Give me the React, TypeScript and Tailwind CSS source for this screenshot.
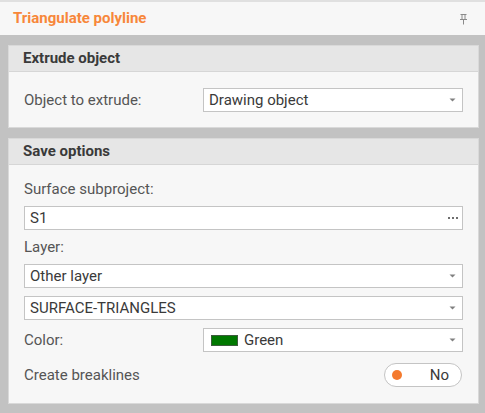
import React from "react";

const font = { fontFamily: "Roboto, 'Liberation Sans', sans-serif" };

function Arrow() {
  return (
    <svg width="7" height="4" viewBox="0 0 7 4" className="shrink-0">
      <path d="M0.5 0.5 H6.5 L3.5 3.5 Z" fill="#808080" />
    </svg>
  );
}

function Select({ children, className = "" }: { children: React.ReactNode; className?: string }) {
  return (
    <div
      className={
        "h-[24px] bg-white border border-[#c4c4c4] flex items-center pl-[5px] pr-[6px] text-[15px] text-[#3a3a3a] " +
        className
      }
    >
      <div className="flex-1 flex items-center min-w-0">{children}</div>
      <Arrow />
    </div>
  );
}

function PanelHeader({ title }: { title: string }) {
  return (
    <div className="h-[26px] bg-[#e6e6e6] border-b border-[#d6d6d6] flex items-center pl-[14px] text-[15px] font-bold text-[#3a3a3a]">
      {title}
    </div>
  );
}

export default function App() {
  return (
    <div className="w-[485px] h-[413px] bg-[#c2c2c2] flex flex-col overflow-hidden" style={font}>
      <div className="h-[35px] bg-[#f7f7f7] border-t-2 border-[#e0e0e0] flex items-center justify-between pl-[13px] pr-[18px]">
        <span className="text-[15px] font-bold text-[#f7873a] -mt-[1px]">Triangulate polyline</span>
        <svg width="7" height="11" viewBox="0 0 7 11" className="mt-[2px]">
          <path d="M0.5 0.5 H6.5 M2 0.5 V5.5 M5 0.5 V5.5 M0 5.5 H7 M3.5 5.5 V10.5" stroke="#8a8a8a" strokeWidth="1" fill="none" />
        </svg>
      </div>
      <div className="flex flex-col gap-[10px] pt-[10px] pl-[8px] pr-[6px]">
        <div className="bg-[#f7f7f7] border border-[#d9d9d9]">
          <PanelHeader title="Extrude object" />
          <div className="flex items-center pt-[16px] pb-[15px] pl-[15px] pr-[15px]">
            <span className="w-[179px] text-[15px] text-[#555555]">Object to extrude:</span>
            <Select className="flex-1">Drawing object</Select>
          </div>
        </div>
        <div className="bg-[#f7f7f7] border border-[#d9d9d9]">
          <PanelHeader title="Save options" />
          <div className="flex flex-col pt-[14px] pb-[16px] px-[15px]">
            <div className="h-[20px] flex items-center text-[15px] text-[#555555]">Surface subproject:</div>
            <div className="mt-[7px] h-[24px] bg-white border border-[#c4c4c4] flex items-center pl-[5px] pr-[4px] text-[15px] text-[#3a3a3a]">
              <span className="flex-1">S1</span>
              <svg width="10" height="2" viewBox="0 0 10 2">
                <rect x="0" y="0" width="2" height="2" fill="#6e6e6e" />
                <rect x="4" y="0" width="2" height="2" fill="#6e6e6e" />
                <rect x="8" y="0" width="2" height="2" fill="#6e6e6e" />
              </svg>
            </div>
            <div className="mt-[7px] h-[20px] flex items-center text-[15px] text-[#555555]">Layer:</div>
            <Select className="mt-[7px]">Other layer</Select>
            <Select className="mt-[8px]">SURFACE-TRIANGLES</Select>
            <div className="mt-[8px] flex items-center">
              <span className="w-[179px] text-[15px] text-[#555555]">Color:</span>
              <Select className="flex-1">
                <span className="w-[27px] h-[11px] bg-[#007800] border border-[#3d5c3d] mr-[6px] ml-[2px]" />
                Green
              </Select>
            </div>
            <div className="mt-[11px] flex items-center justify-between">
              <span className="text-[15px] text-[#555555]">Create breaklines</span>
              <div className="w-[78px] h-[24px] rounded-full bg-white border border-[#c4c4c4] flex items-center pl-[7px] pr-[12px] mr-[1px]">
                <span className="w-[10px] h-[10px] rounded-full bg-[#f47a2e]" />
                <span className="flex-1 text-right text-[15px] text-[#3a3a3a]">No</span>
              </div>
            </div>
          </div>
        </div>
      </div>
    </div>
  );
}
